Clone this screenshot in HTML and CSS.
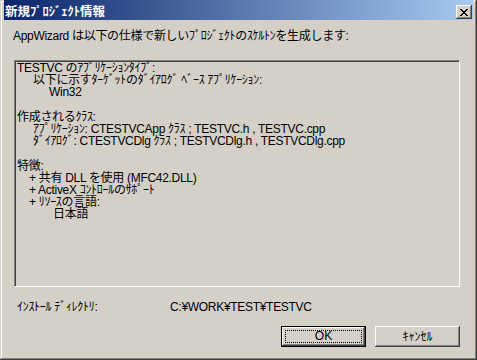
FILE: index.html
```
<!DOCTYPE html>
<html lang="ja">
<head>
    <meta charset="UTF-8">
    <title>新規ﾌﾟﾛｼﾞｪｸﾄ情報</title>
    <link rel="stylesheet" href="styles.css">
</head>
<body>
    <div class="window">
        <div class="titlebar">
            <span class="title">新規ﾌﾟﾛｼﾞｪｸﾄ情報</span>
            <button class="close-btn" aria-label="閉じる">
                <svg width="8" height="7" viewBox="0 0 8 7">
                    <path d="M0 0h2v1h-2zM6 0h2v1h-2zM1 1h2v1h-2zM5 1h2v1h-2zM2 2h4v1h-4zM3 3h2v1h-2zM2 4h4v1h-4zM1 5h2v1h-2zM5 5h2v1h-2zM0 6h2v1h-2zM6 6h2v1h-2z" fill="#000"/>
                </svg>
            </button>
        </div>

        <div class="dialog-body">
            <div class="intro">AppWizard は以下の仕様で新しいﾌﾟﾛｼﾞｪｸﾄのｽｹﾙﾄﾝを生成します:</div>

            <div class="summary">
                <div class="section">
                    <div>TESTVC のｱﾌﾟﾘｹｰｼｮﾝﾀｲﾌﾟ:</div>
                    <div class="lv1">以下に示すﾀｰｹﾞｯﾄのﾀﾞｲｱﾛｸﾞ ﾍﾞｰｽ ｱﾌﾟﾘｹｰｼｮﾝ:</div>
                    <div class="lv2">Win32</div>
                </div>
                <div class="section">
                    <div>作成されるｸﾗｽ:</div>
                    <div class="lv1">ｱﾌﾟﾘｹｰｼｮﾝ: CTESTVCApp ｸﾗｽ ; TESTVC.h , TESTVC.cpp</div>
                    <div class="lv1">ﾀﾞｲｱﾛｸﾞ: CTESTVCDlg ｸﾗｽ ; TESTVCDlg.h , TESTVCDlg.cpp</div>
                </div>
                <div class="section">
                    <div>特徴:</div>
                    <div class="item">+ 共有 DLL を使用 (MFC42.DLL)</div>
                    <div class="item">+ ActiveX ｺﾝﾄﾛｰﾙのｻﾎﾟｰﾄ</div>
                    <div class="item">+ ﾘｿｰｽの言語:</div>
                    <div class="lv3">日本語</div>
                </div>
            </div>

            <div class="install-row">
                <span>ｲﾝｽﾄｰﾙ ﾃﾞｨﾚｸﾄﾘ:</span>
                <span>C:¥WORK¥TEST¥TESTVC</span>
            </div>

            <div class="buttons">
                <button class="btn default"><span class="focus">OK</span></button>
                <button class="btn"><span class="label">ｷｬﾝｾﾙ</span></button>
            </div>
        </div>
    </div>
</body>
</html>
```

FILE: styles.css
```
body {
    margin: 0;
    padding: 0;
    background: #d4d0c8;
    font-family: "Liberation Sans", "Noto Sans CJK JP", sans-serif;
    font-size: 12px;
    letter-spacing: -0.3px;
    color: #000;
}
.window {
    width: 477px;
    height: 360px;
    box-sizing: border-box;
    padding: 0 4px 4px 4px;
    background: #d4d0c8;
    box-shadow: inset -1px -1px #404040, inset 1px 1px #d4d0c8, inset -2px -2px #808080, inset 2px 2px #fff;
    display: flex;
    flex-direction: column;
}
.titlebar {
    height: 20px;
    display: flex;
    justify-content: space-between;
    align-items: flex-start;
    padding: 0 1px;
    background: linear-gradient(to right, #0a246a, #a6caf0);
}
.title {
    color: #fff;
    font-weight: bold;
    font-size: 12.5px;
    letter-spacing: 0;
    line-height: 12px;
    padding-top: 6px;
}
.close-btn {
    width: 16px;
    height: 14px;
    margin-top: 5px;
    padding: 0;
    border: none;
    background: #d4d0c8;
    box-shadow: inset -1px -1px #404040, inset 1px 1px #fff, inset -2px -2px #808080;
    display: flex;
    align-items: center;
    justify-content: center;
}
.close-btn svg {
    display: block;
}
.dialog-body {
    flex: 1;
    padding: 10px 13px 9px 10px;
    display: flex;
    flex-direction: column;
}
.intro {
    line-height: 12px;
    margin-left: -1px;
}
.summary {
    margin-top: 18px;
    height: 227px;
    box-sizing: border-box;
    border: 1px solid;
    border-color: #808080 #fff #fff #808080;
    box-shadow: inset 1px 1px #404040, inset -1px -1px #d4d0c8;
    padding: 1px 2px 0 2px;
    line-height: 12.2px;
    white-space: nowrap;
}
.section {
    margin-bottom: 12.2px;
}
.lv1 {
    padding-left: 16px;
}
.lv2 {
    padding-left: 32px;
}
.lv3 {
    padding-left: 36px;
}
.item {
    padding-left: 12px;
}
.install-row {
    margin-top: 14px;
    padding-left: 3px;
    line-height: 12px;
    display: grid;
    grid-template-columns: 153px auto;
}
.buttons {
    margin-top: 13px;
    display: flex;
    justify-content: flex-end;
    gap: 9px;
}
.btn {
    width: 85px;
    height: 21px;
    padding: 0;
    border: none;
    background: #d4d0c8;
    font: inherit;
    letter-spacing: 0;
    color: #000;
    box-shadow: inset -1px -1px #404040, inset 1px 1px #fff, inset -2px -2px #808080;
    display: flex;
    align-items: center;
    justify-content: center;
}
.btn.default {
    box-shadow: inset 0 0 0 1px #000, inset -2px -2px #404040, inset 2px 2px #fff, inset -3px -3px #808080;
}
.focus {
    width: 77px;
    height: 13px;
    box-sizing: border-box;
    border: 1px dotted #000;
    line-height: 11px;
    text-align: center;
}
.label {
    line-height: 12px;
}
```
